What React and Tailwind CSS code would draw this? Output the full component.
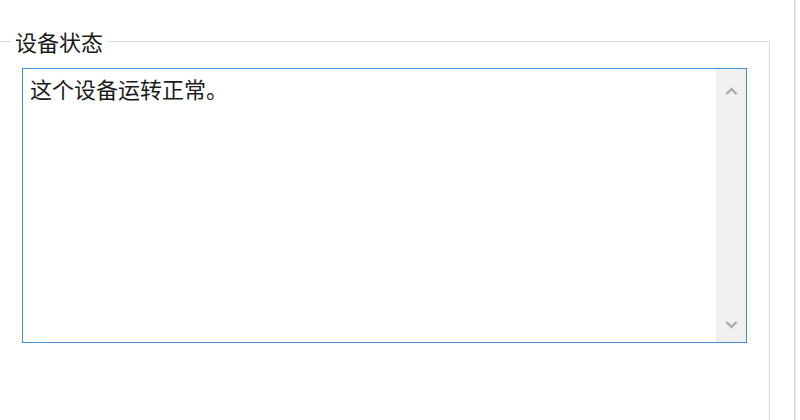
import React from "react";

function Chevron({ up }) {
  return (
    <svg width="13" height="8" viewBox="0 0 13 8" className="block">
      <path
        d={up ? "M1.5 7 L6.5 2 L11.5 7" : "M1.5 1 L6.5 6 L11.5 1"}
        fill="none"
        stroke="#a8a8a8"
        strokeWidth="2.2"
      />
    </svg>
  );
}

export default function App() {
  const font = { fontFamily: '"Noto Sans CJK SC", "Noto Sans", sans-serif' };
  return (
    <div className="w-[800px] h-[420px] bg-white flex overflow-hidden" style={font}>
      <div className="w-[794px] shrink-0 flex">
        <fieldset className="w-[770px] h-[420px] mt-[29px] border-t border-r border-l-0 border-b-0 border-[#dcdcdc] m-0 p-0 pl-[22px]">
          <legend className="-ml-[11px] px-[4px] text-[22px] leading-[24px] text-[#1a1a1a]">设备状态</legend>
          <div className="mt-[15px] w-[725px] h-[275px] border border-[#3f8fda] flex bg-white">
            <div className="flex-1 pl-[7px] pt-[5px] text-[22px] leading-[28px] text-[#1a1a1a]">
              这个设备运转正常。
            </div>
            <div className="w-[30px] bg-[#f0f0f0] flex flex-col items-center justify-between pt-[18px] pb-[13px]">
              <Chevron up />
              <Chevron />
            </div>
          </div>
        </fieldset>
      </div>
      <div className="w-px h-full bg-[#d9d9d9]" />
      <div className="w-px h-full bg-[#ededed]" />
    </div>
  );
}
